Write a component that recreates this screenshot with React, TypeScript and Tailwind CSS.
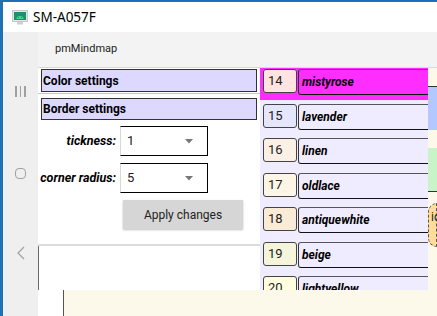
import React from 'react';

type Item = { num: number; name: string; color: string; selected?: boolean };

const items: Item[] = [
  { num: 14, name: 'mistyrose', color: '#ffe4e1', selected: true },
  { num: 15, name: 'lavender', color: '#e6e6fa' },
  { num: 16, name: 'linen', color: '#faf0e6' },
  { num: 17, name: 'oldlace', color: '#fdf5e6' },
  { num: 18, name: 'antiquewhite', color: '#faebd7' },
  { num: 19, name: 'beige', color: '#f5f5dc' },
  { num: 20, name: 'lightyellow', color: '#ffffe0' },
];

function EmulatorIcon() {
  return (
    <svg width="16" height="15" viewBox="0 0 16 15">
      <rect x="0.5" y="0.5" width="15" height="11" fill="#e4e4e4" stroke="#c8c8c8" />
      <rect x="2" y="2" width="12" height="8" fill="#1f8f74" />
      <path d="M4.5 9 A3.5 3 0 0 1 11.5 9 Z" fill="#3ddc84" />
      <circle cx="6.5" cy="7.5" r="0.6" fill="#1f8f74" />
      <circle cx="9.5" cy="7.5" r="0.6" fill="#1f8f74" />
      <rect x="5" y="12" width="6" height="2.5" fill="#d0d0d0" />
    </svg>
  );
}

function Caret() {
  return (
    <svg width="8" height="5" viewBox="0 0 8 5">
      <path d="M0 0 H8 L4 4.5 Z" fill="#777" />
    </svg>
  );
}

function SettingRow({ label, value }: { label: string; value: string }) {
  return (
    <div className="flex items-center">
      <span className="w-[82px] shrink-0 whitespace-nowrap pr-[4px] text-right text-[12.5px] font-bold italic text-black">
        {label}
      </span>
      <div className="flex h-[30px] w-[88px] items-center justify-between border-y border-r border-l border-y-black border-r-black border-l-[#d8d8d8] bg-white pl-[6px] pr-[14px]">
        <span className="text-[13px] text-[#222]">{value}</span>
        <Caret />
      </div>
    </div>
  );
}

export default function App() {
  return (
    <div
      className="flex h-[316px] w-[437px] flex-col overflow-hidden border-t-2 border-l-[3px] border-t-[#1a6fb8] border-l-[#1f72b5] bg-white"
      style={{ fontFamily: 'Roboto, "Noto Sans", sans-serif' }}
    >
      {/* title bar */}
      <div
        className="flex h-[30px] shrink-0 items-center gap-[5px] pl-[9px]"
        style={{ fontFamily: '"Noto Sans", "Liberation Sans", sans-serif' }}
      >
        <EmulatorIcon />
        <span className="text-[13.5px] text-black">SM-A057F</span>
      </div>

      <div className="flex min-h-0 flex-1">
        {/* emulator nav strip */}
        <div className="flex w-[35px] shrink-0 flex-col items-center bg-[#efefef]">
          <div className="mt-[54px] flex gap-[3px]">
            <span className="h-[11px] w-[1.5px] bg-[#a0a0a0]" />
            <span className="h-[11px] w-[1.5px] bg-[#a0a0a0]" />
            <span className="h-[11px] w-[1.5px] bg-[#a0a0a0]" />
          </div>
          <span className="mt-[71px] h-[11px] w-[11px] rounded-[4px] border border-[#a0a0a0]" />
          <svg className="mt-[67px]" width="8" height="14" viewBox="0 0 8 14">
            <path d="M7 1 L1 7 L7 13" fill="none" stroke="#a0a0a0" strokeWidth="1.2" />
          </svg>
        </div>

        {/* app */}
        <div className="flex min-w-0 flex-1 flex-col">
          <div className="flex h-[36px] shrink-0 items-center border-b border-[#d9d9d9] bg-[#f3f3f3] pl-[17px]">
            <span className="text-[11px] text-[#222]">pmMindmap</span>
          </div>

          <div className="flex h-[222px] shrink-0">
            {/* settings panel */}
            <div className="flex w-[222px] shrink-0 flex-col bg-white">
              <div className="mx-[3px] mt-[1px] flex h-[23px] items-center border border-[#333] bg-[#dcd8ff] px-[1px] text-[12px] font-bold text-black">
                Color settings
              </div>
              <div className="mt-[1px] h-[1px] bg-[#c8c8c8]" />
              <div className="mx-[3px] mt-[4px] flex h-[22px] items-center border border-[#333] bg-[#dcd8ff] px-[1px] text-[12px] font-bold text-black">
                Border settings
              </div>
              <div className="mt-[6px] flex flex-col gap-[7px]">
                <SettingRow label="tickness:" value="1" />
                <SettingRow label="corner radius:" value="5" />
              </div>
              <button className="ml-[85px] mt-[7px] flex h-[29px] w-[120px] items-center justify-center bg-[#d6d6d6] text-[12px] text-[#222] shadow-[0_1px_2px_rgba(0,0,0,0.25)]">
                Apply changes
              </button>
              <div className="mt-[15px] h-[2px] bg-[#dcdcdc]" />
              <div className="flex-1 border-l border-[#6a6a6a]" />
            </div>

            {/* color list */}
            <div className="flex w-[168px] shrink-0 flex-col overflow-hidden bg-[#f0ecff]">
              {items.map((it) => (
                <div key={it.num} className="h-[34.5px] shrink-0">
                  <div className={`flex h-[32px] items-start pt-[1px] pl-[3px] ${it.selected ? 'bg-[#ff2dff]' : ''}`}>
                    <div
                      className="flex h-[24px] w-[34px] shrink-0 items-center rounded-[3px] border border-[#444] pl-[4px] text-[13px] text-[#222]"
                      style={{ backgroundColor: it.color }}
                    >
                      {it.num}
                    </div>
                    <div className="ml-[1px] flex h-[26px] w-[160px] shrink-0 items-center rounded-l-[3px] border border-t-[#555] border-b-[#111] border-l-[#333] border-r-0 pl-[3px] text-[12px] font-bold italic text-black">
                      {it.name}
                    </div>
                  </div>
                </div>
              ))}
            </div>

            {/* canvas */}
            <div className="flex min-w-0 flex-1 flex-col overflow-hidden bg-[#fdf9ea]">
              <div className="mt-[18px] h-[44px] shrink-0 border-t border-[#333] bg-[#b3c8ff]" />
              <div className="mt-[18px] h-[44px] shrink-0 border-b border-[#333] bg-[#c8f5c8]" />
              <div className="mt-[11px] flex h-[44px] shrink-0 items-start rounded-l-[12px] border border-dashed border-[#555] bg-[#ffdd99] pl-[2px] pt-[4px] text-[12px] text-[#222]">
                ic
              </div>
            </div>
          </div>

          {/* bottom */}
          <div className="flex flex-1 bg-white pl-[25px]">
            <div className="flex-1 border-l border-[#555] bg-[#fdf9ea]" />
          </div>
        </div>
      </div>
    </div>
  );
}
